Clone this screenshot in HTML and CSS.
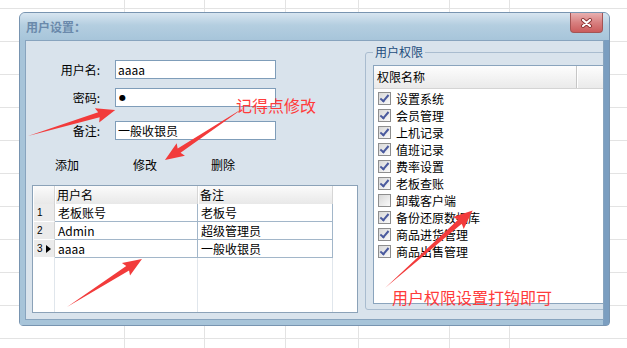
FILE: index.html
```html
<!DOCTYPE html>
<html lang="zh-CN">
<head>
  <meta charset="UTF-8" />
  <title>用户设置</title>
  <link rel="stylesheet" href="styles.css">
</head>
<body>
  <div class="window">
    <div class="titlebar">
      <span class="title">用户设置：</span>
      <button class="close">
        <svg width="13" height="10" viewBox="0 0 13 10">
          <path d="M3 2 L10 8 M10 2 L3 8" stroke="#8a3434" stroke-width="4" stroke-linecap="round"/>
          <path d="M3 2 L10 8 M10 2 L3 8" stroke="#fff" stroke-width="2.2" stroke-linecap="round"/>
        </svg>
      </button>
    </div>
    <div class="frame">
      <div class="client">
        <div class="left-pane">
          <div class="form">
            <label>用户名:</label>
            <input type="text" value="aaaa">
            <label>密码:</label>
            <input type="text" class="pw" value="●">
            <label>备注:</label>
            <input type="text" value="一般收银员">
          </div>
          <div class="actions">
            <button>添加</button>
            <button>修改</button>
            <button>删除</button>
          </div>
          <div class="grid-box">
            <div class="grid">
              <div class="hd"></div>
              <div class="hd">用户名</div>
              <div class="hd">备注</div>

              <div class="rh">1</div>
              <div class="cell">老板账号</div>
              <div class="cell">老板号</div>

              <div class="rh">2</div>
              <div class="cell">Admin</div>
              <div class="cell">超级管理员</div>

              <div class="rh">3 <span class="current"></span></div>
              <div class="cell">aaaa</div>
              <div class="cell">一般收银员</div>

              <div class="fill"></div>
              <div class="fill"></div>
              <div class="fill"></div>
            </div>
          </div>
        </div>

        <fieldset class="perm-group">
          <legend>用户权限</legend>
          <div class="perm-list">
            <div class="perm-head">
              <span class="col-name">权限名称</span>
              <span class="col-rest"></span>
            </div>
            <ul class="perm-items">
              <li><span class="check on"></span>设置系统</li>
              <li><span class="check on"></span>会员管理</li>
              <li><span class="check on"></span>上机记录</li>
              <li><span class="check on"></span>值班记录</li>
              <li><span class="check on"></span>费率设置</li>
              <li><span class="check on"></span>老板查账</li>
              <li><span class="check"></span>卸载客户端</li>
              <li><span class="check on"></span>备份还原数据库</li>
              <li><span class="check on"></span>商品进货管理</li>
              <li><span class="check on"></span>商品出售管理</li>
            </ul>
          </div>
        </fieldset>
      </div>
    </div>
  </div>

  <div class="note note-edit">记得点修改</div>
  <div class="note note-perm">用户权限设置打钩即可</div>

  <svg class="arrows" width="627" height="348" viewBox="0 0 627 348">
    <g fill="#f23b3b">
      <polygon transform="translate(28 136) rotate(-16.6)" points="0,0 74,-2.6 72,-7.5 91,0 72,7.5 74,2.6"/>
      <polygon transform="translate(245 107) rotate(146.5)" points="0,0 79,-2.6 77,-7.5 96,0 77,7.5 79,2.6"/>
      <polygon transform="translate(67 307) rotate(-32.6)" points="0,0 72,-2.6 70,-7.5 89,0 70,7.5 72,2.6"/>
      <polygon transform="translate(385 288) rotate(-41.5)" points="0,0 100,-2.8 98,-8 117,0 98,8 100,2.8"/>
    </g>
  </svg>
</body>
</html>
```

FILE: styles.css
```css
html, body {
  margin: 0;
}
body {
  position: relative;
  width: 627px;
  height: 348px;
  overflow: hidden;
  font-family: "Noto Sans CJK SC", sans-serif;
  font-size: 12px;
  color: #000;
  background-color: #fff;
  background-image:
    repeating-linear-gradient(to bottom, transparent 0 8px, #e3e3e3 8px 9px, transparent 9px 33px),
    linear-gradient(#e3e3e3, #e3e3e3),
    linear-gradient(#e3e3e3, #e3e3e3),
    linear-gradient(#e3e3e3, #e3e3e3),
    linear-gradient(#e3e3e3, #e3e3e3),
    linear-gradient(#e3e3e3, #e3e3e3),
    linear-gradient(#e3e3e3, #e3e3e3);
  background-size: 100% 100%, 1px 100%, 1px 100%, 1px 100%, 1px 100%, 1px 100%, 1px 100%;
  background-position: 0 0, 124px 0, 204px 0, 285px 0, 358px 0, 449px 0, 509px 0;
  background-repeat: no-repeat;
}

/* window frame */
.window {
  box-sizing: border-box;
  width: 591px;
  height: 314px;
  margin: 12px 0 0 19px;
  border: 1px solid #7894b0;
  border-radius: 6px 6px 4px 4px;
  background: #a7c4d9;
  display: flex;
  flex-direction: column;
}
.titlebar {
  height: 27px;
  display: flex;
  justify-content: space-between;
  align-items: flex-start;
  padding-left: 6px;
  border-radius: 5px 5px 0 0;
  background: linear-gradient(#d7e5f0, #b4cee0 45%, #a7c5da);
}
.title {
  line-height: 28px;
  font-weight: bold;
  color: #6a89ab;
}
.close {
  width: 33px;
  height: 20px;
  margin-right: 6px;
  padding: 0;
  border: 1px solid #a35454;
  border-top: none;
  border-radius: 0 0 4px 4px;
  background: linear-gradient(#e9b0b0, #d88080 50%, #cb5c5c);
  display: flex;
  align-items: center;
  justify-content: center;
}
.frame {
  flex: 1;
  display: flex;
  padding: 0 5px 5px 5px;
  background: linear-gradient(to right, #a7c4d9 calc(100% - 6px), #7b9ec0 calc(100% - 6px));
}
.client {
  flex: 1;
  display: flex;
  background: #d9e3ec;
  border: 1px solid #88a4be;
  overflow: hidden;
}

/* left side */
.left-pane {
  width: 339px;
  flex: none;
}
.form {
  display: grid;
  grid-template-columns: 74px 161px;
  grid-template-rows: 19px 28px 33px;
  column-gap: 15px;
  align-items: end;
  margin-top: 19px;
}
.form label {
  text-align: right;
  line-height: 19px;
}
.form input {
  box-sizing: border-box;
  width: 161px;
  height: 19px;
  margin: 0;
  padding: 0 2px;
  border: 1px solid #7f9db9;
  background: #fff;
  font-family: "Noto Sans CJK SC", sans-serif;
  font-size: 12px;
  color: #000;
  outline: none;
}
.form input.pw {
  font-family: "DejaVu Sans", sans-serif;
  font-size: 8px;
  padding-left: 3px;
}
.actions {
  display: flex;
  margin: 13px 0 0 2px;
}
.actions button {
  width: 78px;
  height: 22px;
  padding: 0;
  border: none;
  background: transparent;
  font-family: "Noto Sans CJK SC", sans-serif;
  font-size: 12px;
  color: #000;
}
.grid-box {
  box-sizing: border-box;
  width: 326px;
  height: 128px;
  margin: 10px 0 0 6px;
  border: 1px solid #8ba2b8;
  background: #fff;
}
.grid {
  display: grid;
  grid-template-columns: 22px 143px 135px;
  grid-template-rows: 18px 18px 18px 18px 1fr;
  height: 100%;
}
.grid > div {
  box-sizing: border-box;
  white-space: nowrap;
  overflow: hidden;
}
.hd {
  line-height: 18px;
  padding-left: 2px;
  background: linear-gradient(#fbfbfb, #e8e8e8);
  border-right: 1px solid #d6d6d6;
  box-shadow: inset 1px 0 0 #fff;
}
.rh {
  display: flex;
  align-items: center;
  gap: 3px;
  padding-left: 4px;
  font-family: "Liberation Sans", sans-serif;
  font-size: 10px;
  background: #ebebeb;
  border-bottom: 1px solid #fff;
  border-right: 1px solid #d2d2d2;
  box-shadow: inset 1px 0 0 #fff;
}
.current {
  width: 0;
  height: 0;
  border-left: 5px solid #000;
  border-top: 4px solid transparent;
  border-bottom: 4px solid transparent;
}
.cell {
  line-height: 17px;
  padding-left: 3px;
  border-right: 1px solid #a2b6c9;
  border-bottom: 1px solid #a2b6c9;
}
.fill {
  border-right: 1px solid #e0e6ec;
}

/* right side */
.perm-group {
  flex: none;
  width: 260px;
  margin: 4px 0 9px 0;
  padding: 6px 0 5px 7px;
  border: 1px solid #a9bccf;
  border-radius: 3px;
}
.perm-group legend {
  padding: 0 2px;
  line-height: 14px;
  color: #234d7c;
}
.perm-list {
  box-sizing: border-box;
  height: 239px;
  border: 1px solid #8aa4bd;
  background: #fff;
}
.perm-head {
  box-sizing: border-box;
  height: 23px;
  display: flex;
  background: linear-gradient(#fdfdfd, #eaeaea);
  border-bottom: 1px solid #d4d4d4;
}
.col-name {
  width: 199px;
  padding-left: 3px;
  line-height: 22px;
  border-right: 1px solid #c6c6c6;
  box-shadow: 1px 0 0 #fff;
}
.col-rest {
  flex: 1;
}
.perm-items {
  list-style: none;
  margin: 0;
  padding: 1px 0 0 4px;
}
.perm-items li {
  height: 17px;
  display: flex;
  align-items: center;
  gap: 5px;
}
.check {
  position: relative;
  box-sizing: border-box;
  width: 13px;
  height: 13px;
  border: 1px solid #8e8e8e;
  background: linear-gradient(135deg, #d8d8d8, #fafafa);
}
.check.on::after {
  content: "";
  position: absolute;
  left: 3px;
  top: 0;
  width: 3px;
  height: 7px;
  border: solid #4a5a9e;
  border-width: 0 2px 2px 0;
  transform: rotate(40deg);
}

/* red annotations */
.note {
  position: absolute;
  font-size: 16px;
  line-height: 16px;
  color: #ff3b3b;
  white-space: nowrap;
}
.note-edit {
  left: 236px;
  top: 97px;
}
.note-perm {
  left: 392px;
  top: 289px;
}
.arrows {
  position: absolute;
  left: 0;
  top: 0;
  pointer-events: none;
}
```
